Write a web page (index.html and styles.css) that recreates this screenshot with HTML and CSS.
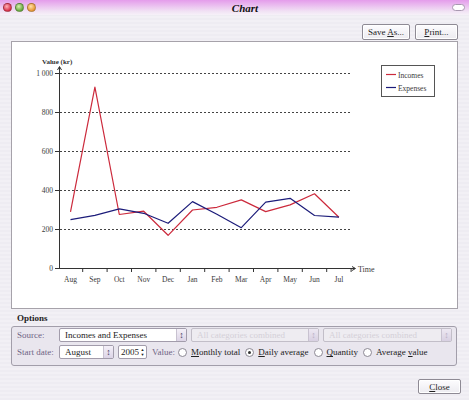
FILE: index.html
```html
<!DOCTYPE html>
<html>
<head>
<meta charset="utf-8">
<link rel="stylesheet" href="styles.css">
</head>
<body>
<div class="window">
  <div class="titlebar">
    <div class="lights">
      <span class="light red"></span>
      <span class="light green"></span>
      <span class="light yellow"></span>
    </div>
    <div class="title">Chart</div>
    <span class="capsule"></span>
  </div>
  <div class="toolbar">
    <button class="btn save">Save <u>A</u>s...</button>
    <button class="btn print"><u>P</u>rint...</button>
  </div>
  <div class="panel">
    <svg class="chart" width="445" height="266" viewBox="12 42 445 266" xmlns="http://www.w3.org/2000/svg">
      <g class="grid" stroke="#444" stroke-width="1" stroke-dasharray="2 2">
        <line x1="60" y1="73.5" x2="351" y2="73.5"/>
        <line x1="60" y1="112.5" x2="351" y2="112.5"/>
        <line x1="60" y1="151.5" x2="351" y2="151.5"/>
        <line x1="60" y1="190.5" x2="351" y2="190.5"/>
        <line x1="60" y1="229.5" x2="351" y2="229.5"/>
      </g>
      <g stroke="#333" stroke-width="1" fill="none">
        <line x1="59.5" y1="67" x2="59.5" y2="269"/>
        <line x1="59" y1="268.5" x2="355" y2="268.5"/>
        <line x1="55" y1="73.5" x2="59" y2="73.5"/>
        <line x1="55" y1="112.5" x2="59" y2="112.5"/>
        <line x1="55" y1="151.5" x2="59" y2="151.5"/>
        <line x1="55" y1="190.5" x2="59" y2="190.5"/>
        <line x1="55" y1="229.5" x2="59" y2="229.5"/>
        <line x1="55" y1="268.5" x2="59" y2="268.5"/>
        <path d="M57.5 70 L59.5 66.5 L61.5 70"/>
        <path d="M352 266.5 L355.5 268.5 L352 270.5"/>
        <line x1="82.7" y1="268" x2="82.7" y2="272"/>
        <line x1="107.1" y1="268" x2="107.1" y2="272"/>
        <line x1="131.5" y1="268" x2="131.5" y2="272"/>
        <line x1="155.9" y1="268" x2="155.9" y2="272"/>
        <line x1="180.3" y1="268" x2="180.3" y2="272"/>
        <line x1="204.7" y1="268" x2="204.7" y2="272"/>
        <line x1="229.1" y1="268" x2="229.1" y2="272"/>
        <line x1="253.5" y1="268" x2="253.5" y2="272"/>
        <line x1="277.9" y1="268" x2="277.9" y2="272"/>
        <line x1="302.3" y1="268" x2="302.3" y2="272"/>
        <line x1="326.7" y1="268" x2="326.7" y2="272"/>
        <line x1="351.1" y1="268" x2="351.1" y2="272"/>
      </g>
      <g class="ylabels" text-anchor="end">
        <text x="53" y="76">1 000</text>
        <text x="53" y="115">800</text>
        <text x="53" y="154">600</text>
        <text x="53" y="193">400</text>
        <text x="53" y="232">200</text>
        <text x="53" y="271">0</text>
      </g>
      <text class="axis-title" x="42" y="64">Value (kr)</text>
      <text class="axis-time" x="358" y="272">Time</text>
      <g class="xlabels" text-anchor="middle">
        <text x="70.5" y="282">Aug</text>
        <text x="94.9" y="282">Sep</text>
        <text x="119.3" y="282">Oct</text>
        <text x="143.7" y="282">Nov</text>
        <text x="168.1" y="282">Dec</text>
        <text x="192.5" y="282">Jan</text>
        <text x="216.9" y="282">Feb</text>
        <text x="241.3" y="282">Mar</text>
        <text x="265.7" y="282">Apr</text>
        <text x="290.1" y="282">May</text>
        <text x="314.5" y="282">Jun</text>
        <text x="338.9" y="282">Jul</text>
      </g>
      <polyline fill="none" stroke="#cc2a3c" stroke-width="1.2" stroke-linejoin="round" points="70.5,211.9 94.9,87.1 119.3,214.5 143.7,211.2 168.1,235.3 192.5,210 216.9,207.3 241.3,199.9 265.7,211.6 290.1,204.9 314.5,193.8 338.9,217.2"/>
      <polyline fill="none" stroke="#1c1c7a" stroke-width="1.2" stroke-linejoin="round" points="70.5,219.6 94.9,215.3 119.3,208.8 143.7,213.3 168.1,223.3 192.5,201.6 216.9,214.3 241.3,227.7 265.7,202.2 290.1,198.3 314.5,215.5 338.9,217.2"/>
      <rect x="381.5" y="65.5" width="53" height="31" fill="#fff" stroke="#555" stroke-width="1"/>
      <line x1="386" y1="74.5" x2="396" y2="74.5" stroke="#cc2a3c" stroke-width="1.2"/>
      <line x1="386" y1="87.5" x2="396" y2="87.5" stroke="#1c1c7a" stroke-width="1.2"/>
      <text class="legend" x="398" y="77.5">Incomes</text>
      <text class="legend" x="398" y="90.5">Expenses</text>
    </svg>
  </div>
  <div class="options-label">Options</div>
  <div class="group">
    <div class="row">
      <span class="lbl">Source:</span>
      <div class="combo w1"><span class="ctext">Incomes and Expenses</span><span class="arrows">&#x2195;</span></div>
      <div class="combo w2 disabled"><span class="ctext">All categories combined</span><span class="arrows">&#x2195;</span></div>
      <div class="combo w3 disabled"><span class="ctext">All categories combined</span><span class="arrows">&#x2195;</span></div>
    </div>
    <div class="row">
      <span class="lbl">Start date:</span>
      <div class="combo month"><span class="ctext">August</span><span class="arrows">&#x2195;</span></div>
      <div class="spin"><span class="ctext">2005</span><span class="spinarrows">&#x25B2;<br>&#x25BC;</span></div>
      <span class="lbl value">Value:</span>
      <span class="radio"></span><span class="rtext"><u>M</u>onthly total</span>
      <span class="radio checked"></span><span class="rtext"><u>D</u>aily average</span>
      <span class="radio"></span><span class="rtext"><u>Q</u>uantity</span>
      <span class="radio"></span><span class="rtext">Average <u>v</u>alue</span>
    </div>
  </div>
  <div class="bottom">
    <button class="btn close"><u>C</u>lose</button>
  </div>
</div>
</body>
</html>
```
FILE: styles.css
```css
html, body {
  margin: 0;
  padding: 0;
}
body {
  width: 469px;
  height: 400px;
  overflow: hidden;
  background: #f1eff4;
  font-family: "Liberation Serif", "DejaVu Serif", serif;
  font-size: 9px;
  color: #222;
}
.window {
  width: 469px;
  height: 400px;
  display: flex;
  flex-direction: column;
  background: repeating-linear-gradient(#f2f0f5 0px, #f2f0f5 2px, #eeecf2 2px, #eeecf2 4px);
}
.titlebar {
  height: 15px;
  flex: none;
  display: flex;
  align-items: center;
  background: linear-gradient(#e49ceb, #f1e2f4 75%, #f6f1f8);
}
.lights {
  display: flex;
  gap: 3px;
  padding-left: 3px;
  width: 60px;
}
.light {
  width: 9px;
  height: 9px;
  border-radius: 50%;
  box-sizing: border-box;
  border: 1px solid rgba(0,0,0,0.25);
}
.light.red { background: radial-gradient(circle at 40% 35%, #ffb0b8, #d8304a 70%); }
.light.green { background: radial-gradient(circle at 40% 35%, #d8f0b0, #68a840 70%); }
.light.yellow { background: radial-gradient(circle at 40% 35%, #ffe0a8, #e89838 70%); }
.title {
  flex: 1;
  text-align: center;
  font-weight: bold;
  font-style: italic;
  font-size: 11px;
  color: #111;
  padding-left: 24px;
}
.capsule {
  width: 11px;
  height: 5px;
  border: 1px solid #a898b0;
  border-radius: 4px;
  background: #fff;
  margin: 0 4px 0 49px;
}
.toolbar {
  flex: none;
  display: flex;
  justify-content: flex-end;
  gap: 5px;
  padding: 9px 11px 1px 0;
}
.btn {
  font-family: "Liberation Serif", "DejaVu Serif", serif;
  font-size: 9px;
  color: #222;
  height: 16px;
  padding: 0;
  border: 1px solid #8e8a94;
  border-radius: 2px;
  background: linear-gradient(#fdfcfe, #ecebf0);
  box-shadow: inset 0 0 0 1px #fff;
}
.btn.save { width: 48px; }
.btn.print { width: 43px; }
.panel {
  flex: none;
  margin: 0 11px;
  height: 268px;
  box-sizing: border-box;
  border: 1px solid #a6a2aa;
  background: #fff;
}
.chart {
  display: block;
  font-family: "Liberation Serif", "DejaVu Serif", serif;
}
.chart text {
  font-size: 7.5px;
  fill: #3a3a3a;
  font-weight: normal;
}
.chart .axis-title {
  font-weight: bold;
  fill: #333;
  font-size: 7px;
}
.chart .axis-time {
  font-size: 8px;
}
.options-label {
  flex: none;
  padding: 4px 0 0 17px;
  height: 12px;
  font-weight: bold;
  font-size: 9px;
}
.group {
  flex: none;
  margin: 1px 12px 0 11px;
  height: 40px;
  box-sizing: border-box;
  border: 1px solid #a29eaa;
  border-radius: 3px;
  background: #e9e6ee;
  display: flex;
  flex-direction: column;
  gap: 3px;
  padding: 1px 0 0 5px;
}
.row {
  display: flex;
  align-items: center;
  height: 14px;
}
.lbl {
  color: #6f6484;
  width: 42px;
  flex: none;
}
.lbl.value {
  width: auto;
  margin-left: 5px;
  margin-right: 3px;
}
.combo, .spin {
  height: 14px;
  box-sizing: border-box;
  border: 1px solid #a29cab;
  border-radius: 2px;
  background: #fff;
  display: flex;
  align-items: center;
  flex: none;
}
.ctext {
  flex: 1;
  padding-left: 5px;
  white-space: nowrap;
  overflow: hidden;
}
.arrows {
  width: 10px;
  height: 12px;
  box-sizing: border-box;
  border-left: 1px solid #c8c2d0;
  background: linear-gradient(#f4f0f8, #dcd4e6);
  font-size: 9px;
  line-height: 12px;
  text-align: center;
  color: #443a5a;
  font-weight: bold;
}
.combo.w1 { width: 128px; }
.combo.w2 { width: 128px; margin-left: 4px; }
.combo.w3 { width: 129px; margin-left: 4px; }
.combo.disabled {
  background: #eeecf1;
  border-color: #c2bec8;
}
.combo.disabled .ctext { color: #d4d0d8; }
.combo.disabled .arrows { color: #b8b0c4; background: linear-gradient(#ede8f2, #d8d0e2); }
.combo.month { width: 55px; }
.spin {
  width: 29px;
  margin-left: 4px;
}
.spin .ctext { padding-left: 2px; }
.spinarrows {
  font-size: 4px;
  line-height: 5px;
  width: 7px;
  text-align: center;
  color: #222;
}
.radio {
  width: 9px;
  height: 9px;
  box-sizing: border-box;
  border: 1px solid #8c8894;
  border-radius: 50%;
  background: #fff;
  flex: none;
  margin: 0 4px 0 0;
  position: relative;
}
.radio.checked::after {
  content: "";
  position: absolute;
  left: 2px;
  top: 2px;
  width: 3px;
  height: 3px;
  border-radius: 50%;
  background: #333;
}
.rtext {
  white-space: nowrap;
  margin-right: 5px;
}
.bottom {
  flex: none;
  display: flex;
  justify-content: flex-end;
  padding: 13px 8px 0 0;
}
.btn.close {
  width: 43px;
  height: 15px;
}
```
